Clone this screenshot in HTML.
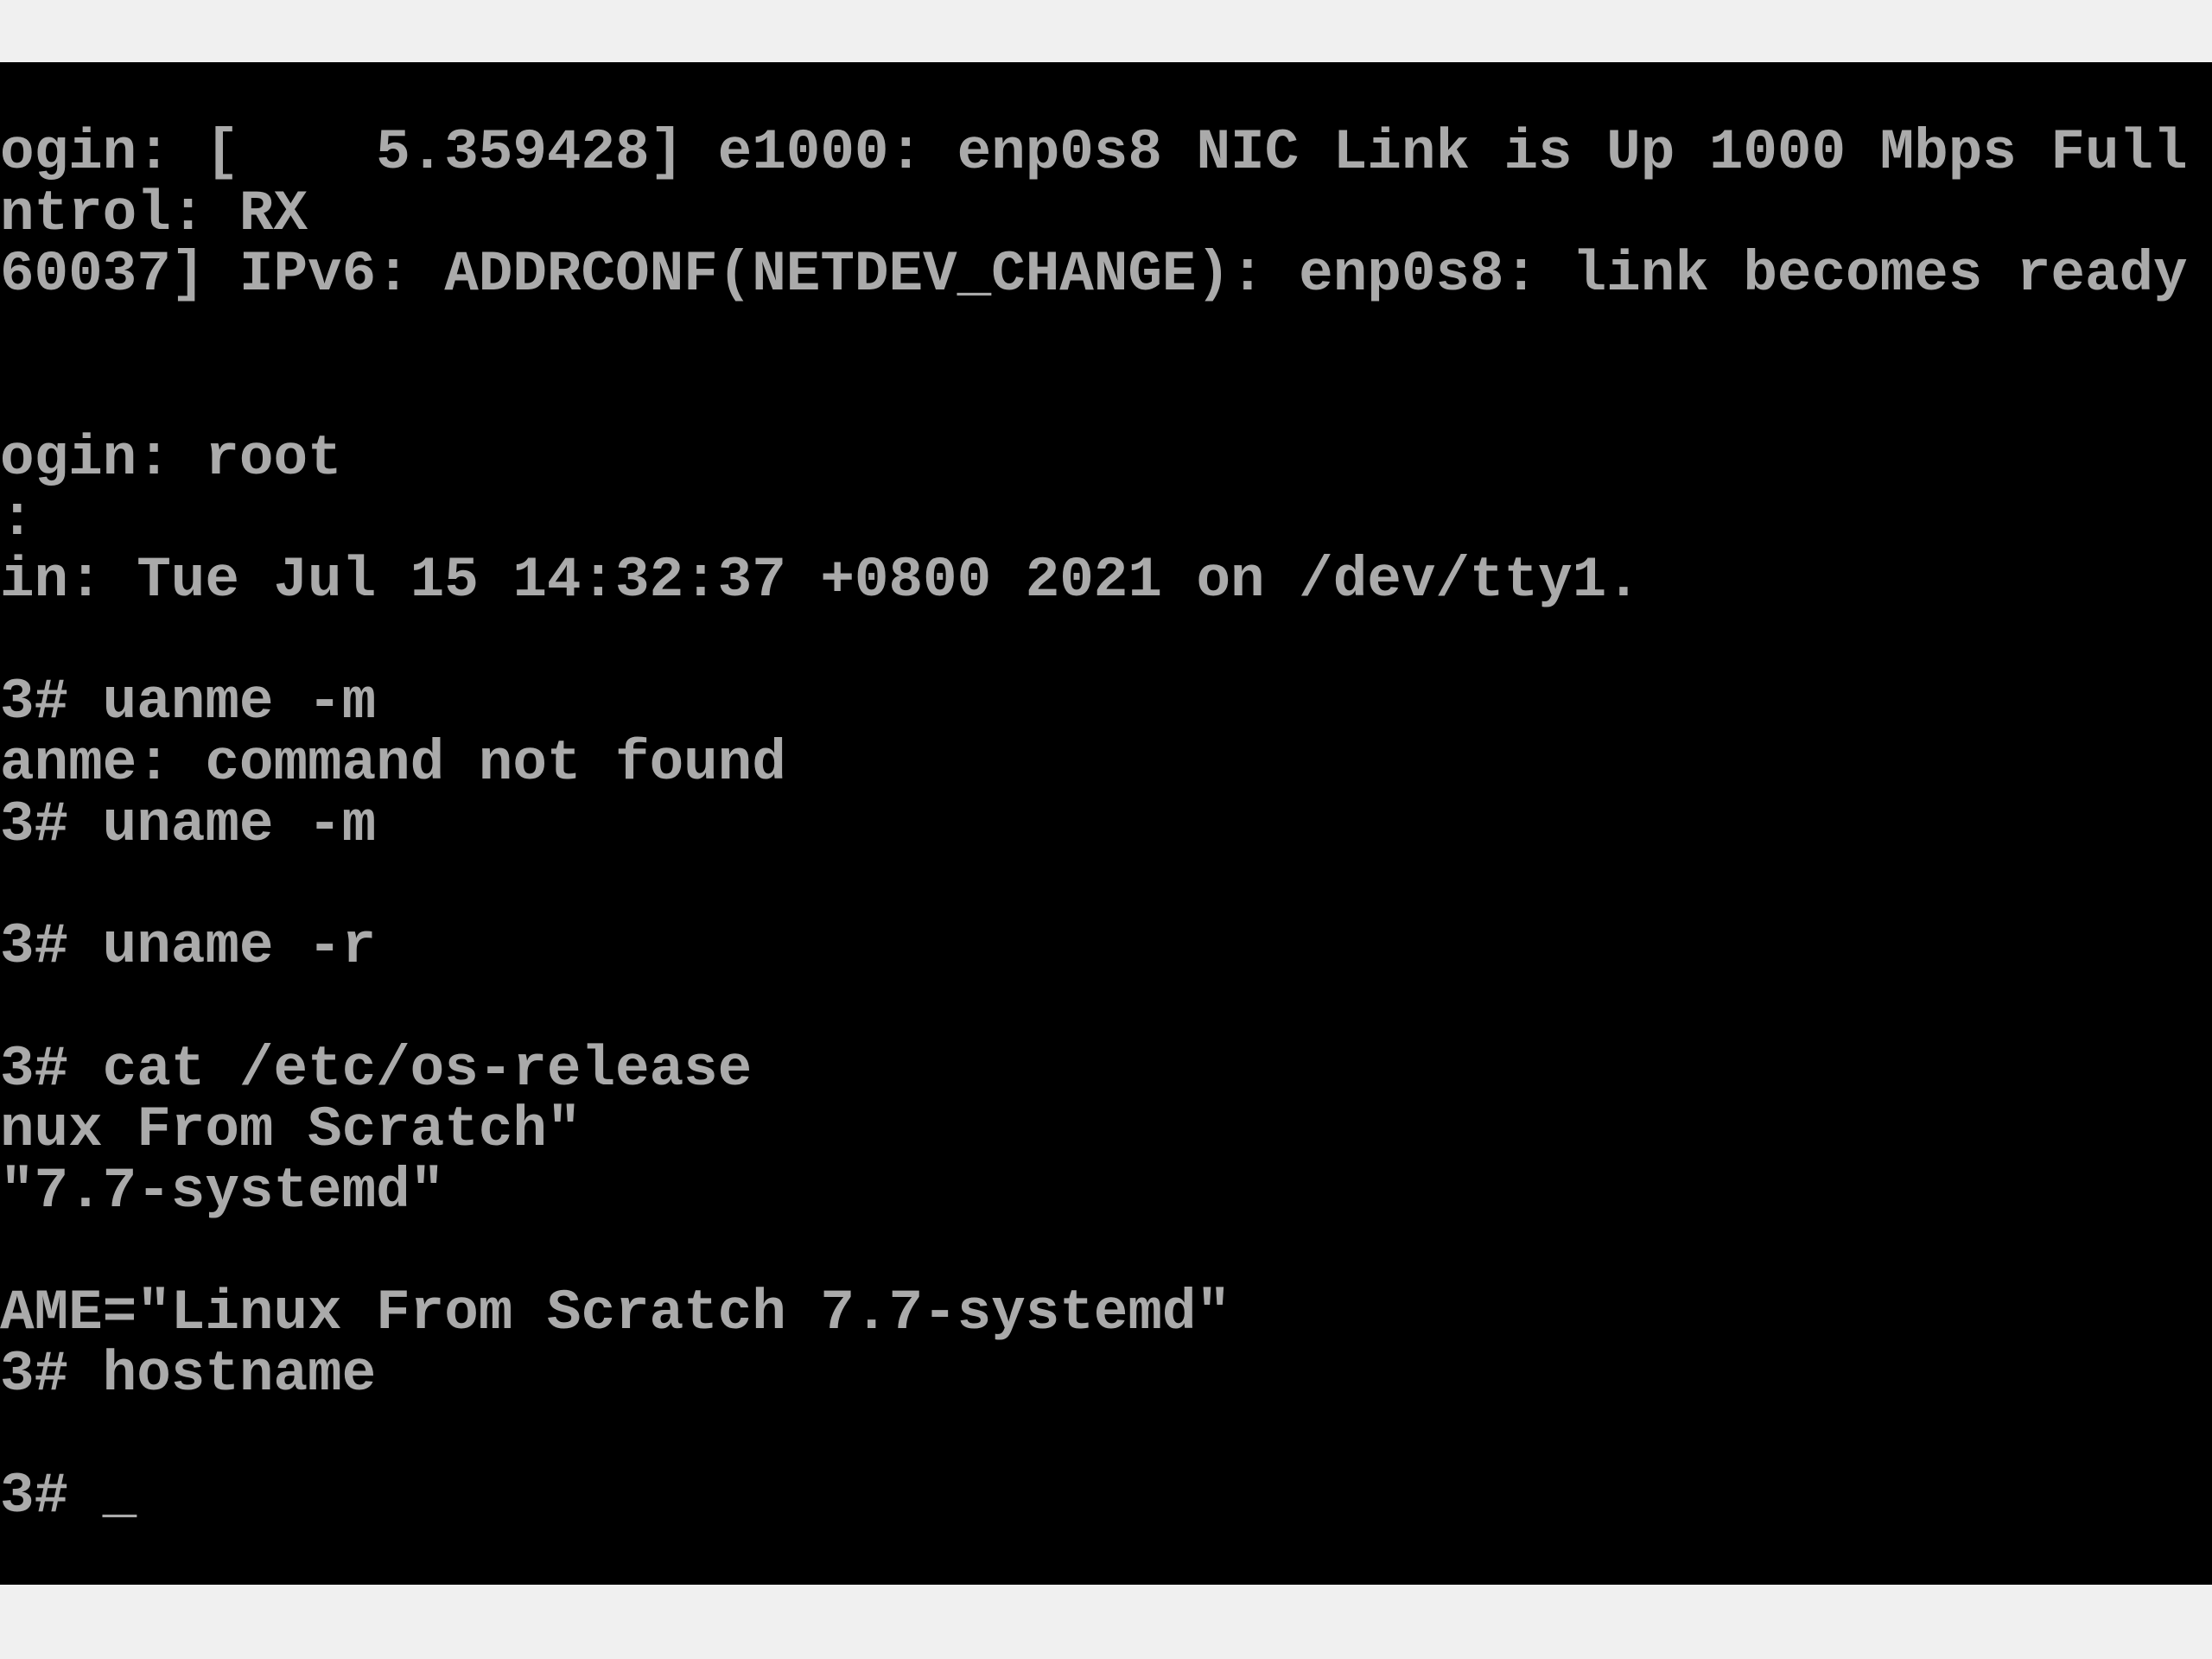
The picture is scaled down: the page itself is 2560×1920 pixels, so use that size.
<!DOCTYPE html>
<html><head><meta charset="utf-8"><style>
html,body{margin:0;padding:0;width:2560px;height:1920px;background:#f0f0f0;overflow:hidden}
#scr{position:absolute;left:0;top:72px;width:2560px;height:1762px;background:#000}
pre{position:absolute;left:0;top:142px;margin:0;font-family:"Liberation Mono",monospace;font-size:66px;line-height:70.7px;color:#aaaaaa;font-weight:bold;letter-spacing:-0.05px;white-space:pre}
</style></head><body>
<div id="scr"></div>
<pre>ogin: [    5.359428] e1000: enp0s8 NIC Link is Up 1000 Mbps Full
ntrol: RX
60037] IPv6: ADDRCONF(NETDEV_CHANGE): enp0s8: link becomes ready


ogin: root
:
in: Tue Jul 15 14:32:37 +0800 2021 on /dev/tty1.

3# uanme -m
anme: command not found
3# uname -m

3# uname -r

3# cat /etc/os-release
nux From Scratch"
"7.7-systemd"

AME="Linux From Scratch 7.7-systemd"
3# hostname

3# _</pre>
</body></html>
